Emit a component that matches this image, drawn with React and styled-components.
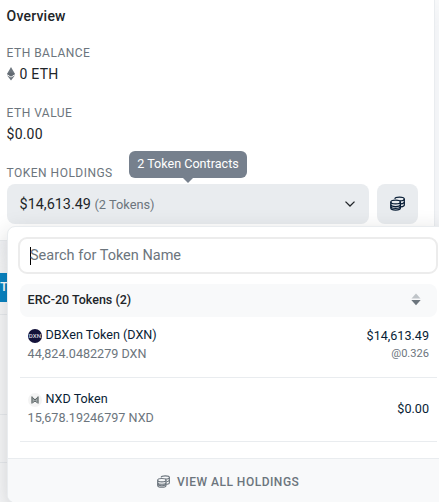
import React from 'react'
import styled, { createGlobalStyle } from 'styled-components';

const tokens = [
    { id: 'dxn', name: 'DBXen Token (DXN)', amount: '44,824.0482279 DXN', value: '$14,613.49', rate: '@0.326' },
    { id: 'nxd', name: 'NXD Token', amount: '15,678.19246797 NXD', value: '$0.00' },
];

function EthIcon() {
    return (
        <svg width="8" height="14" viewBox="0 0 8 14" fill="#6c757d">
            <path d="M4 0 0 7l4 2.4L8 7z" />
            <path d="M0 8.2 4 13.6 8 8.2 4 10.6z" />
            <path d="M4 5.2 0 7l4 2.4L8 7z" fill="#626a72" />
        </svg>
    );
}

function CoinsIcon({ size }) {
    return (
        <svg width={size} height={size} viewBox="0 0 15 15" fill="none" stroke="currentColor" strokeWidth="1.25">
            <ellipse cx="5.6" cy="6" rx="4.8" ry="1.9" />
            <path d="M.8 6v6c0 1.1 2.1 2 4.8 2s4.8-.9 4.8-2V6" />
            <path d="M.8 8.6c0 1.1 2.1 2 4.8 2s4.8-.9 4.8-2M.8 10.5c0 1 2.1 1.9 4.8 1.9s4.8-.9 4.8-1.9" />
            <path d="M4.7 2.7C5 1.7 7 1 9.5 1c2.7 0 4.8.8 4.8 1.9v6c0 .9-1.4 1.6-3.3 1.9" />
            <path d="M14.3 2.9c0 1.1-2.1 1.9-4.8 1.9M14.3 5.9c0 .9-1.4 1.6-3.3 1.9" />
        </svg>
    );
}

function TokenLogo({ id }) {
    if (id === 'dxn') {
        return (
            <svg width="14" height="14" viewBox="0 0 14 14">
                <circle cx="7" cy="7" r="7" fill="#14123a" />
                <text x="7" y="9.2" fill="#d3d2de" fontSize="6.2" fontWeight="500" fontFamily="Roboto, sans-serif" textAnchor="middle">DXN</text>
            </svg>
        );
    }
    return (
        <svg width="14" height="14" viewBox="0 0 14 14">
            <circle cx="7" cy="7" r="7" fill="#f4f4f4" />
            <path d="M3.5 3.2 7 6l3.5-2.8v7.6L7 8.5l-3.5 2.3z" fill="#a3aaab" />
            <path d="M4 3.5v7M10 3.5v7M4.4 4.6 7 7l2.6-2.4M5.2 9.4 7 8l1.8 1.4" stroke="#5c6465" strokeWidth="1" fill="none" />
        </svg>
    );
}

function App() {
    return (
        <Page>
            <GlobalStyle />
            <Card>
                <Title>Overview</Title>
                <Field>
                    <Label>ETH BALANCE</Label>
                    <Value><EthIcon />0 ETH</Value>
                </Field>
                <Field>
                    <Label>ETH VALUE</Label>
                    <Value>$0.00</Value>
                </Field>
                <Field>
                    <Label>TOKEN HOLDINGS</Label>
                    <Holdings>
                        <Select>
                            <span>$14,613.49 <Count>(2 Tokens)</Count></span>
                            <svg width="10" height="6" viewBox="0 0 10 6" fill="none" stroke="#212529" strokeWidth="1.3">
                                <path d="M.5.6 5 5 9.5.6" />
                            </svg>
                            <Tooltip>2 Token Contracts</Tooltip>
                        </Select>
                        <WalletButton><CoinsIcon size={15} /></WalletButton>
                    </Holdings>
                </Field>
            </Card>

            <Background>
                <Tab>T</Tab>
                <Line $gap={12} />
                <Line $gap={99} />
                <Line $gap={47} />
            </Background>

            <Menu>
                <Search><Caret />Search for Token Name</Search>
                <Group>
                    ERC-20 Tokens (2)
                    <svg width="10" height="13" viewBox="0 0 10 13">
                        <path d="M5 .5 9.5 5.5H.5z" fill="#bfc4c8" />
                        <path d="M.3 7h9.4L5 12.3z" fill="#6c757d" />
                    </svg>
                </Group>
                <List>
                    {tokens.map((token) => (
                        <Row key={token.id}>
                            <div>
                                <Name><TokenLogo id={token.id} />{token.name}</Name>
                                <Amount>{token.amount}</Amount>
                            </div>
                            <Price>
                                {token.value}
                                {token.rate && <Rate>{token.rate}</Rate>}
                            </Price>
                        </Row>
                    ))}
                </List>
                <Footer><CoinsIcon size={13} />VIEW ALL HOLDINGS</Footer>
            </Menu>
        </Page>
    );
}

export default App;

const GlobalStyle = createGlobalStyle`
    * {
        box-sizing: border-box;
    }
    body {
        margin: 0;
        font-family: Roboto, sans-serif;
        font-size: 14.5px;
        color: #212529;
    }
    svg {
        display: block;
        flex: none;
    }
`;

const Page = styled.div`
    position: relative;
    width: 439px;
    height: 502px;
    overflow: hidden;
    background: #f8f9fa;
`;

const Card = styled.section`
    width: 435px;
    height: 241px;
    padding: 6px 16px 0 6.6px;
    background: #fff;
    border-right: 1px solid #e9ecef;
    border-bottom: 1px solid #e9ecef;
    box-shadow: 0 8px 19px rgba(189, 197, 209, 0.2);
`;

const Title = styled.h3`
    margin: 0;
    font-size: 14px;
    line-height: 20px;
    font-weight: 500;
    letter-spacing: 0.2px;
`;

const Field = styled.div`
    margin-top: 17px;
    & + & {
        margin-top: 18px;
    }
`;

const Label = styled.div`
    font-size: 12px;
    line-height: 21px;
    letter-spacing: 0.48px;
    color: #6c757d;
`;

const Value = styled.div`
    display: flex;
    align-items: center;
    gap: 5px;
    height: 21px;
    padding-bottom: 2px;
    font-size: 14px;
    letter-spacing: 0.2px;
`;

const Holdings = styled.div`
    display: flex;
    gap: 8px;
    margin-left: 0.4px;
`;

const Select = styled.div`
    position: relative;
    display: flex;
    align-items: center;
    justify-content: space-between;
    width: 362px;
    height: 40px;
    padding: 0 14px 0 12.6px;
    border-radius: 8px;
    background: #e9ecef;
    font-size: 14.4px;
`;

const Count = styled.span`
    font-size: 12.8px;
    color: #6c757d;
`;

const WalletButton = styled.div`
    display: flex;
    align-items: center;
    justify-content: center;
    width: 41px;
    height: 40px;
    padding-bottom: 2px;
    border-radius: 8px;
    background: #e9ecef;
    color: #081d35;
`;

const Tooltip = styled.div`
    position: absolute;
    left: 122px;
    top: -33px;
    width: 118px;
    height: 27px;
    border-radius: 6px;
    background: #76808d;
    color: #fff;
    font-size: 12.6px;
    line-height: 26px;
    text-align: center;
    &::after {
        content: '';
        position: absolute;
        left: 54px;
        top: 27px;
        border: 5px solid transparent;
        border-top-color: #76808d;
        border-bottom: 0;
    }
`;

const Background = styled.div`
    padding-top: 32px;
`;

const Tab = styled.div`
    width: 12px;
    height: 29px;
    background: #0784c3;
    color: #fff;
    font-size: 13px;
    font-weight: 500;
    line-height: 28px;
`;

const Line = styled.div`
    height: 1px;
    margin-top: ${(props) => props.$gap}px;
    background: #e9ecef;
`;

const Menu = styled.div`
    position: absolute;
    left: 7px;
    top: 226px;
    width: 443px;
    height: 277px;
    display: flex;
    flex-direction: column;
    padding-top: 10px;
    overflow: hidden;
    background: #fff;
    border: 1px solid #e9ecef;
    border-radius: 8px;
    box-shadow: 0 8px 24px rgba(33, 37, 41, 0.2);
`;

const Search = styled.div`
    display: flex;
    align-items: center;
    width: 420px;
    height: 37px;
    margin-left: 10px;
    padding: 0 10px;
    border: 2px solid #ececec;
    border-radius: 9px;
    color: #6c757d;
`;

const Caret = styled.span`
    width: 1px;
    height: 18px;
    margin-right: -1px;
    background: #000;
`;

const Group = styled.div`
    display: flex;
    align-items: center;
    justify-content: space-between;
    width: 417px;
    height: 33px;
    margin: 10px 0 0 12px;
    padding: 0 16px 2px 7.6px;
    border-radius: 8px;
    background: #f8f9fa;
    font-size: 12.5px;
    font-weight: 500;
`;

const List = styled.div`
    flex: 1;
    width: 417px;
    margin-left: 12px;
`;

const Row = styled.div`
    display: flex;
    align-items: center;
    justify-content: space-between;
    height: 61px;
    padding: 0 8px 7px;
    border-bottom: 1px solid #e9ecef;
    & + & {
        height: 64px;
        padding: 0 8px 3px;
    }
`;

const Name = styled.div`
    display: flex;
    align-items: center;
    gap: 3.5px;
    font-size: 12.6px;
    line-height: 19px;
    color: #081d35;
    svg {
        margin-top: 3px;
    }
`;

const Amount = styled.div`
    margin-left: -0.4px;
    font-size: 12.6px;
    line-height: 19px;
    color: #6c757d;
`;

const Price = styled.div`
    font-size: 12.6px;
    line-height: 19px;
    text-align: right;
    color: #081d35;
`;

const Rate = styled.div`
    font-size: 11.1px;
    line-height: 17px;
    color: #6c757d;
`;

const Footer = styled.div`
    display: flex;
    align-items: center;
    gap: 7px;
    height: 44px;
    padding: 2px 0 0 149px;
    border-top: 1px solid #e9ecef;
    background: #f8f9fa;
    color: #6c757d;
    font-size: 12px;
    font-weight: 500;
    letter-spacing: 0.5px;
`;
